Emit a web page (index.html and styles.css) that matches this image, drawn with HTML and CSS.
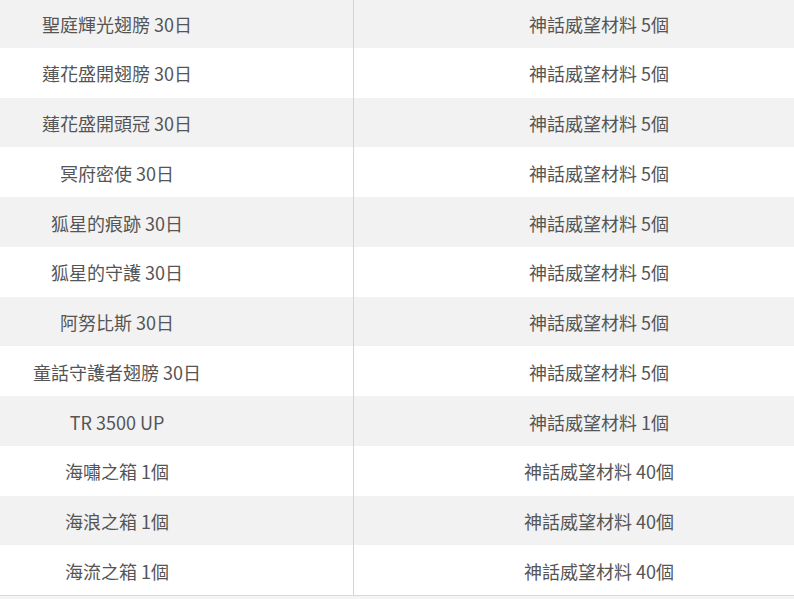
FILE: index.html
```html
<!DOCTYPE html>
<html lang="zh-Hant">
<head>
<meta charset="utf-8">
<link rel="stylesheet" href="styles.css">
</head>
<body>
<div class="table">
  <div class="row odd"><div class="cell left">聖庭輝光翅膀 30日</div><div class="cell right">神話威望材料 5個</div></div>
  <div class="row"><div class="cell left">蓮花盛開翅膀 30日</div><div class="cell right">神話威望材料 5個</div></div>
  <div class="row odd"><div class="cell left">蓮花盛開頭冠 30日</div><div class="cell right">神話威望材料 5個</div></div>
  <div class="row"><div class="cell left">冥府密使 30日</div><div class="cell right">神話威望材料 5個</div></div>
  <div class="row odd"><div class="cell left">狐星的痕跡 30日</div><div class="cell right">神話威望材料 5個</div></div>
  <div class="row"><div class="cell left">狐星的守護 30日</div><div class="cell right">神話威望材料 5個</div></div>
  <div class="row odd"><div class="cell left">阿努比斯 30日</div><div class="cell right">神話威望材料 5個</div></div>
  <div class="row"><div class="cell left">童話守護者翅膀 30日</div><div class="cell right">神話威望材料 5個</div></div>
  <div class="row odd"><div class="cell left">TR 3500 UP</div><div class="cell right">神話威望材料 1個</div></div>
  <div class="row"><div class="cell left">海嘯之箱 1個</div><div class="cell right">神話威望材料 40個</div></div>
  <div class="row odd"><div class="cell left">海浪之箱 1個</div><div class="cell right">神話威望材料 40個</div></div>
  <div class="row"><div class="cell left">海流之箱 1個</div><div class="cell right">神話威望材料 40個</div></div>
</div>
</body>
</html>
```

FILE: styles.css
```css
html, body {
  margin: 0;
  padding: 0;
}
body {
  background: #f4f4f4;
  font-family: "Noto Sans CJK TC", "Noto Sans", sans-serif;
  font-size: 18px;
  color: #555555;
  overflow: hidden;
}
.table {
  margin-top: -1.8px;
  background: #ffffff;
  border-bottom: 1px solid #d9d9d9;
}
.row {
  display: grid;
  grid-template-columns: 354px 1fr;
  height: 49.75px;
  background: #ffffff;
}
.row.odd {
  background: #f2f2f2;
}
.cell {
  display: flex;
  align-items: center;
  justify-content: center;
  white-space: nowrap;
  padding-top: 1px;
}
.left {
  padding-right: 119px;
  border-right: 1px solid #d4d4d4;
}
.right {
  padding-left: 50px;
}
```
